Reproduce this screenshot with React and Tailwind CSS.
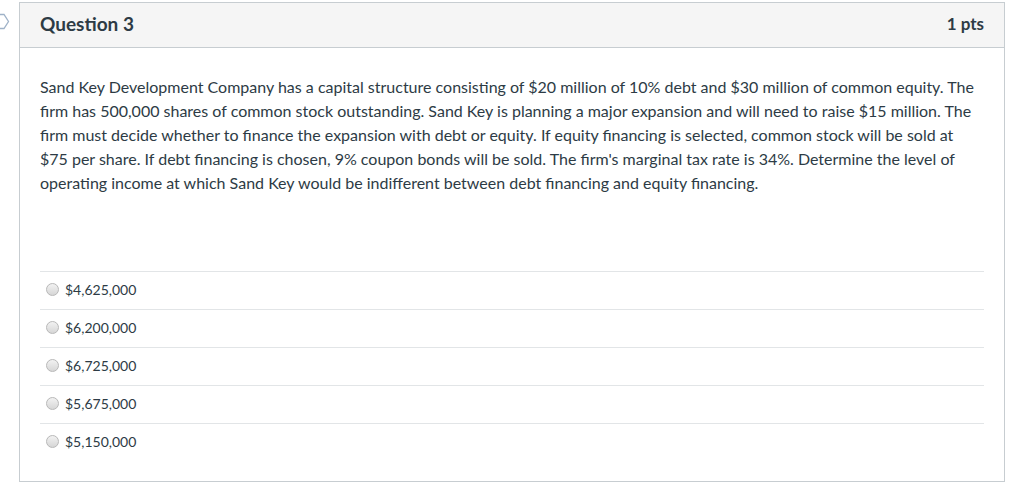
import React from 'react'

const answers = ['$4,625,000', '$6,200,000', '$6,725,000', '$5,675,000', '$5,150,000']

function App() {
  return (
    <div className="relative w-[1024px] h-[486px] bg-white" style={{ fontFamily: 'Lato, "Open Sans", sans-serif' }}>
      <svg className="absolute left-0 top-[13px]" width="10" height="18" viewBox="0 0 10 18">
        <path d="M-2 1.5 L4 1.5 L8.5 8.5 L4 15.5 L-2 15.5" fill="none" stroke="#9fb2c8" strokeWidth="1.3" />
      </svg>
      <div className="absolute left-[19px] top-[2px] w-[986px] h-[480px] border border-[#c7cdd1]">
        <div className="flex items-center justify-between h-[45px] px-5 pb-[2px] bg-[#f5f5f5] border-b border-[#c7cdd1]">
          <h2 className="text-[19px] font-bold text-[#2d3b45]">Question 3</h2>
          <span className="text-[17px] font-bold text-[#2d3b45]">1 pts</span>
        </div>
        <div className="px-5 pt-[27px]">
          <p className="text-[16px] leading-6 text-[#2d3b45]">
            Sand Key Development Company has a capital structure consisting of $20 million of 10% debt and $30 million of common equity. The firm has 500,000 shares of common stock outstanding. Sand Key is planning a major expansion and will need to raise $15 million. The firm must decide whether to finance the expansion with debt or equity. If equity financing is selected, common stock will be sold at $75 per share. If debt financing is chosen, 9% coupon bonds will be sold. The firm's marginal tax rate is 34%. Determine the level of operating income at which Sand Key would be indifferent between debt financing and equity financing.
          </p>
          <div className="mt-[76px]">
            {answers.map((a) => (
              <div key={a} className="flex items-center h-[38px] pb-[3px] border-t border-[#e2e5e7]">
                <span className="ml-[6px] w-[13px] h-[13px] rounded-full border border-[#b8b8b8] bg-gradient-to-b from-[#f2f2f2] to-[#d6d6d6]" />
                <span className="ml-[6px] text-[14px] text-[#2d3b45]">{a}</span>
              </div>
            ))}
          </div>
        </div>
      </div>
    </div>
  )
}

export default App
